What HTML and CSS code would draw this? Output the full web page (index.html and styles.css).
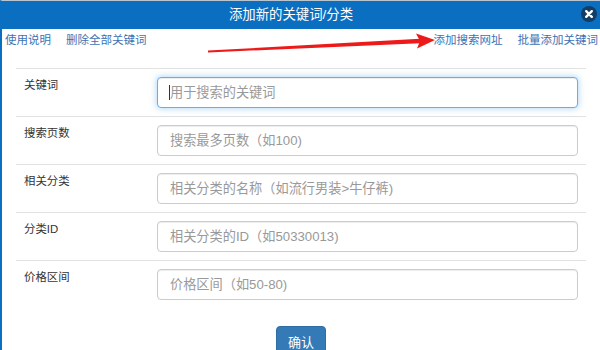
FILE: index.html
```html
<!DOCTYPE html>
<html lang="zh-CN">
<head>
<meta charset="utf-8">
<title>添加新的关键词/分类</title>
<link rel="stylesheet" href="styles.css">
</head>
<body>
<div class="dialog">
  <div class="header">
    <div class="title">添加新的关键词/分类</div>
    <span class="close">
      <svg width="16" height="16" viewBox="0 0 16 16"><circle cx="8" cy="8" r="8" fill="#123d66"/><path d="M5.2 5.2 L10.8 10.8 M10.8 5.2 L5.2 10.8" stroke="#fff" stroke-width="2.4" stroke-linecap="round"/></svg>
    </span>
  </div>
  <div class="links">
    <div class="group">
      <a href="#">使用说明</a>
      <a href="#">删除全部关键词</a>
    </div>
    <div class="group">
      <a href="#">添加搜索网址</a>
      <a href="#">批量添加关键词</a>
    </div>
  </div>
  <div class="form">
    <div class="row">
      <label class="label">关键词</label>
      <span class="field">
        <input class="input focused" type="text" placeholder="用于搜索的关键词">
        <span class="caret"></span>
      </span>
    </div>
    <div class="row">
      <label class="label">搜索页数</label>
      <input class="input" type="text" placeholder="搜索最多页数（如100)">
    </div>
    <div class="row">
      <label class="label">相关分类</label>
      <input class="input" type="text" placeholder="相关分类的名称（如流行男装&gt;牛仔裤)">
    </div>
    <div class="row">
      <label class="label">分类ID</label>
      <input class="input" type="text" placeholder="相关分类的ID（如50330013)">
    </div>
    <div class="row">
      <label class="label">价格区间</label>
      <input class="input" type="text" placeholder="价格区间（如50-80)">
    </div>
  </div>
  <div class="actions">
    <button class="btn" type="button">确认</button>
  </div>
  <svg class="arrow" width="600" height="350" viewBox="0 0 600 350">
    <polygon points="208,50.6 208,52.4 420,43.2 420,38.8" fill="#ee1a1a"/>
    <polygon points="435,40 416,33.5 420,41 417,48.5" fill="#ee1a1a"/>
  </svg>
</div>
</body>
</html>
```
FILE: styles.css
```css
html, body {
  margin: 0;
  padding: 0;
  background: #fff;
}
body {
  font-family: "Liberation Sans", "Noto Sans CJK SC", sans-serif;
  color: #333;
}
.dialog {
  position: relative;
  width: 598px;
  height: 349px;
  border-left: 2px solid #0b6fc1;
  border-top: 1px solid #b9c4cf;
  overflow: hidden;
}
.header {
  position: relative;
  height: 28px;
  background: #0b6fc1;
  color: #fff;
  display: flex;
  align-items: center;
}
.title {
  flex: 1;
  text-align: center;
  padding-right: 20px;
  font-size: 13.4px;
  line-height: 28px;
}
.close {
  position: absolute;
  right: 3px;
  top: 5px;
  width: 16px;
  height: 16px;
}
.close svg { display: block; }
.links {
  height: 39px;
  display: flex;
  justify-content: space-between;
  align-items: flex-start;
  padding: 2px 2px 0 3px;
  box-sizing: border-box;
}
.group {
  display: flex;
  gap: 15px;
}
.links a {
  color: #3d72b3;
  text-decoration: none;
  font-size: 11.5px;
  line-height: 18px;
}
.form {
  margin-left: 14px;
  width: 570px;
}
.row {
  display: flex;
  align-items: flex-start;
  border-top: 1px solid #e2e2e2;
  padding: 8px 0 8px;
  height: 31px;
}
.label {
  width: 133px;
  padding-left: 8px;
  font-size: 11.4px;
  line-height: 16px;
  color: #333;
}
.field {
  position: relative;
  display: block;
  width: 421px;
  height: 31px;
}
.caret {
  position: absolute;
  left: 12px;
  top: 8px;
  width: 1px;
  height: 15px;
  background: #333;
}
.input {
  width: 421px;
  height: 31px;
  box-sizing: border-box;
  border: 1px solid #ccc;
  border-radius: 4px;
  padding: 0 12px;
  font-family: "Liberation Sans", "Noto Sans CJK SC", sans-serif;
  font-size: 13.2px;
  color: #555;
  box-shadow: inset 0 1px 1px rgba(0,0,0,.075);
  outline: none;
  background: #fff;
}
.input::placeholder { color: #999; }
.input.focused {
  border-color: #66afe9;
  box-shadow: inset 0 1px 1px rgba(0,0,0,.075), 0 0 7px rgba(102,175,233,.6);
}
.actions {
  display: flex;
  justify-content: center;
  padding-top: 18px;
}
.btn {
  font-family: "Liberation Sans", "Noto Sans CJK SC", sans-serif;
  font-size: 13px;
  line-height: 20px;
  padding: 6px 11px;
  color: #fff;
  background: #337ab7;
  border: 1px solid #2e6da4;
  border-radius: 4px;
}
.arrow {
  position: absolute;
  left: -2px;
  top: -1px;
  pointer-events: none;
}
```
